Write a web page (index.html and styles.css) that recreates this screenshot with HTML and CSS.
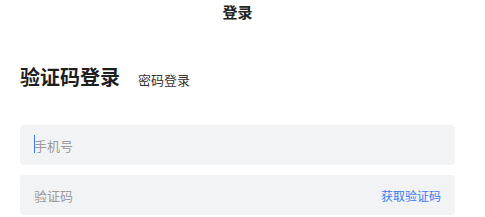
FILE: index.html
```html
<!DOCTYPE html>
<html lang="zh-CN">

<head>
    <meta charset="UTF-8">
    <title>登录</title>
    <link rel="stylesheet" href="styles.css">
</head>

<body>
    <div class="page">
        <!-- Barra superior -->
        <header class="nav-bar">登录</header>

        <!-- Pestañas de tipo de login -->
        <div class="login-tabs">
            <span class="tab active">验证码登录</span>
            <span class="tab">密码登录</span>
        </div>

        <!-- Formulario -->
        <form class="login-form">
            <div class="field focused">
                <span class="caret"></span>
                <input type="tel" placeholder="手机号">
            </div>
            <div class="field">
                <input type="text" placeholder="验证码">
                <a href="#" class="get-code">获取验证码</a>
            </div>
        </form>
    </div>
</body>

</html>
```

FILE: styles.css
```css
/* Reseteo básico */
* {
    margin: 0;
    padding: 0;
    box-sizing: border-box;
}

body {
    font-family: "Noto Sans CJK SC", "Noto Sans", sans-serif;
    color: #222;
    background: #fff;
}

.page {
    width: 475px;
}

/* Barra superior */
.nav-bar {
    height: 24px;
    line-height: 24px;
    text-align: center;
    font-size: 15px;
    font-weight: bold;
    color: #222;
}

/* Pestañas */
.login-tabs {
    display: flex;
    align-items: baseline;
    gap: 18px;
    padding: 38px 20px 0;
}

.tab {
    font-size: 13px;
    line-height: 30px;
    color: #333;
}

.tab.active {
    font-size: 20px;
    font-weight: bold;
    color: #1f1f1f;
}

/* Formulario */
.login-form {
    padding: 30px 20px 0;
    display: flex;
    flex-direction: column;
    gap: 10px;
}

.field {
    position: relative;
    display: flex;
    align-items: center;
    height: 40px;
    padding: 0 14px 0 14px;
    background: #f2f3f5;
    border-radius: 4px;
}

/* Cursor del campo activo */
.caret {
    position: absolute;
    left: 14px;
    top: 10px;
    width: 1px;
    height: 18px;
    background: #3a7bf2;
}

.field input {
    flex-grow: 1;
    border: none;
    outline: none;
    background: transparent;
    font-family: inherit;
    font-size: 13px;
    color: #333;
}

.field input::placeholder {
    color: #9a9a9a;
}

.get-code {
    font-size: 12px;
    color: #3a7bf2;
    text-decoration: none;
}
```
